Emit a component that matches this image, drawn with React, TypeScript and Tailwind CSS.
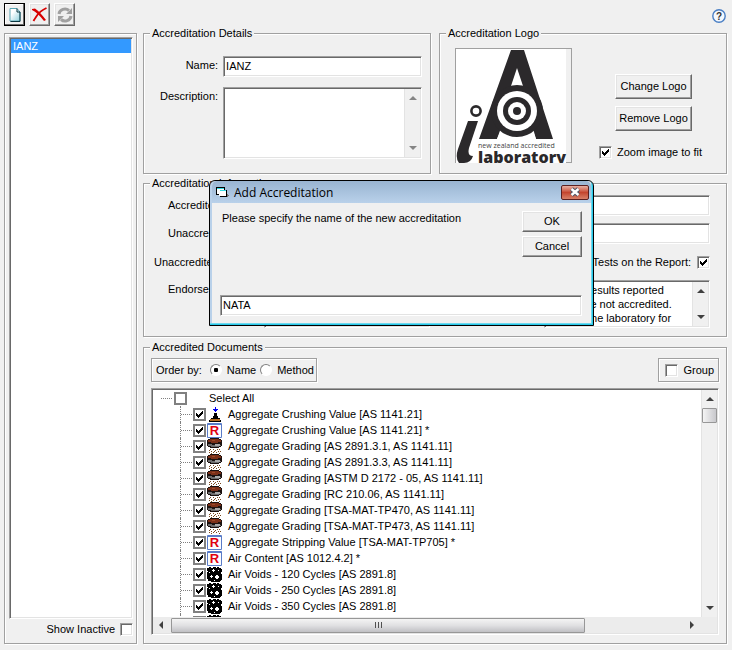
import { useId, type ReactNode } from "react";

const SUNKEN =
  "border border-t-[#a0a0a0] border-l-[#a0a0a0] border-r-white border-b-white bg-white shadow-[inset_1px_1px_0_#696969,inset_-1px_-1px_0_#e3e3e3]";
const ETCHED = "border border-[#a0a0a0] shadow-[1px_1px_0_#fff,inset_1px_1px_0_#fff]";
const RAISED =
  "border border-t-white border-l-white border-r-[#696969] border-b-[#696969] bg-[#f0f0f0] shadow-[inset_-1px_-1px_0_#a0a0a0,inset_1px_1px_0_#e3e3e3]";

function Group({ title, className = "", children }: { title: string; className?: string; children: ReactNode }) {
  return (
    <fieldset className={`${ETCHED} min-w-0 px-[7px] ${className}`}>
      <legend className="-ml-px bg-[#f0f0f0] px-[2px]">{title}</legend>
      {children}
    </fieldset>
  );
}

function Tick({ id, checked, flat, label }: { id?: string; checked?: boolean; flat?: boolean; label?: string }) {
  return (
    <span className="relative block size-[13px] shrink-0">
      <input
        id={id}
        type="checkbox"
        defaultChecked={checked}
        aria-label={label}
        className={`peer block size-[13px] appearance-none ${flat ? "border-2 border-[#808080] bg-white" : SUNKEN}`}
      />
      <svg
        viewBox="0 0 7 7"
        shapeRendering="crispEdges"
        className="pointer-events-none absolute top-[3px] left-[3px] hidden size-[7px] peer-checked:block"
      >
        <path d="M0 2h1v1h1v1h1v-1h1v-1h1v-1h1v-1h1v3h-1v1h-1v1h-1v1h-1v1h-1v-1h-1v-1h-1z" fill="#000" />
      </svg>
    </span>
  );
}

function Radio({ id, checked }: { id: string; checked?: boolean }) {
  return (
    <span className="relative block size-3 shrink-0">
      <input
        id={id}
        type="radio"
        name="order"
        defaultChecked={checked}
        className="peer block size-3 appearance-none rounded-full border border-t-[#808080] border-l-[#808080] border-r-white border-b-white bg-white"
      />
      <span className="pointer-events-none absolute top-1 left-1 hidden size-1 rounded-[1px] bg-black peer-checked:block" />
    </span>
  );
}

function Arrow({ dir, dim }: { dir: "up" | "down" | "left" | "right"; dim?: boolean }) {
  const d = {
    up: "M4 2L8 6H0Z",
    down: "M0 2H8L4 6Z",
    left: "M6 0V8L2 4Z",
    right: "M2 0V8L6 4Z",
  }[dir];
  return (
    <svg viewBox="0 0 8 8" className="size-2">
      <path d={d} fill={dim ? "#858585" : "#404040"} />
    </svg>
  );
}

function TextArea({ id, value, dim, className }: { id: string; value?: string; dim?: boolean; className: string }) {
  return (
    <div className={`${SUNKEN} flex min-w-0 p-px ${className}`}>
      <textarea
        id={id}
        defaultValue={value}
        className="min-w-0 flex-1 resize-none overflow-hidden bg-transparent px-px pt-px leading-[14px] whitespace-pre outline-none"
      />
      <div className="flex w-4 shrink-0 flex-col items-center justify-between border-l border-[#e3e3e3] bg-[#f0f0f0] py-[5px]">
        <Arrow dir="up" dim={dim} />
        <Arrow dir="down" dim={dim} />
      </div>
    </div>
  );
}

function TextBox({ id, value, label, className = "" }: { id?: string; value?: string; label?: string; className?: string }) {
  return (
    <input
      id={id}
      type="text"
      aria-label={label}
      defaultValue={value}
      className={`${SUNKEN} block h-[21px] min-w-0 px-[2px] pb-[2px] outline-none ${className}`}
    />
  );
}

function PushButton({ children, className }: { children: ReactNode; className: string }) {
  return (
    <button type="button" className={`${RAISED} ${className}`}>
      {children}
    </button>
  );
}

function ToolButton({ label, active, children }: { label: string; active?: boolean; children: ReactNode }) {
  return (
    <button
      type="button"
      aria-label={label}
      className={`flex h-[23px] w-[21px] items-center justify-center ${
        active ? "border border-black bg-[#f0f0f0] shadow-[inset_-1px_-1px_0_#696969,inset_1px_1px_0_#fff]" : RAISED
      }`}
    >
      {children}
    </button>
  );
}

function LogoPicture() {
  return (
    <svg viewBox="0 0 115 114" className="absolute top-0 left-0 h-[114px] w-[115px]">
      <rect x="0" y="0" width="110" height="114" fill="#fff" />
      <rect x="110" y="0" width="5" height="113" fill="#f0f0f0" />
      <path d="M55 1H68L97 90H80L76 79H46L41 90H23Z" fill="#2b292b" />
      <path d="M61 19L67 37H55Z" fill="#fff" />
      <path d="M41 90L46 76H76L80 90Z" fill="#fff" />
      <circle cx="61" cy="62" r="26" fill="#2b292b" />
      <circle cx="61" cy="62" r="20" fill="#fff" />
      <circle cx="61" cy="62" r="14" fill="#2b292b" />
      <circle cx="61" cy="62" r="9" fill="#fff" />
      <circle cx="61" cy="62" r="4" fill="#2b292b" />
      <circle cx="20" cy="62" r="4.600" fill="#fff" stroke="#2b292b" strokeWidth="2.600" />
      <path d="M12 72H22L13 99Q11 107 17 107Q15 114 8 114H3Q-1 109 2 100Z" fill="#2b292b" />
      <text x="22" y="99" fontSize="7" fill="#444" fontFamily="'Open Sans', sans-serif">
        new zealand accredited
      </text>
      <text x="22" y="114" fontSize="16" fontWeight="800" fill="#2b292b" fontFamily="'Open Sans', sans-serif">
        laboratory
      </text>
    </svg>
  );
}

type Kind = "crush" | "report" | "sieve" | "voids";

function DocIcon({ kind }: { kind: Kind }) {
  if (kind === "report")
    return (
      <span className="flex size-[15px] items-center justify-center rounded-[1px] border border-t-2 border-[#5a7cc8] bg-[#fafcff] text-[13px] leading-none font-bold text-[#e00010]">
        R
      </span>
    );
  if (kind === "crush")
    return (
      <svg viewBox="0 0 15 15" shapeRendering="crispEdges" className="size-[15px]">
        <path d="M8 0h1v2h2v1h-1v1h-1v1h-1v-1h-1v-1h-1v-1h2z" fill="#0000f0" />
        <path d="M7 6h3v5h3v1h-9v-1h3zM2 13h1v1h-1zM13 13h1v1h-1zM2 14h12v1h-12z" fill="#000" />
        <path d="M6 9h5v2h-5z" fill="#000" />
        <path d="M3 12h10v2h-10z" fill="#b06a20" />
      </svg>
    );
  if (kind === "sieve")
    return (
      <svg viewBox="0 0 15 16" shapeRendering="crispEdges" className="h-4 w-[15px]">
        <path d="M3 0h9v1h2v1h1v6h-1v1h-2v1h-9v-1h-2v-1h-1v-6h1v-1h2z" fill="#1c1210" />
        <path d="M3 1h9v1h2v2h-3v1h-7v-1h-3v-2h2z" fill="#7c3018" />
        <path d="M5 2h3v1h-3z" fill="#a04a28" />
        <path d="M1 6h4v1h9v1h-2v1h-8v-1h-3z" fill="#6c6c6c" />
        <path d="M8 6h5v2h-5z" fill="#a8a8a8" />
        <path
          d="M3 11h1v1h-1zM6 11h1v1h-1zM10 11h1v1h-1zM12 11h1v1h-1zM2 12h1v1h-1zM8 12h1v1h-1zM4 13h1v1h-1zM7 13h1v1h-1zM11 13h1v1h-1zM13 13h1v1h-1zM2 14h1v1h-1zM6 14h1v1h-1zM9 14h1v1h-1zM12 15h1v1h-1zM4 15h1v1h-1z"
          fill="#7a4a20"
        />
      </svg>
    );
  return (
    <svg viewBox="0 0 15 15" shapeRendering="crispEdges" className="size-[15px]">
      <path d="M0 0H15V15H0Z" fill="#000" />
      <path
        d="M0 0h2v1h-2zM4 0h2v1h-2zM9 0h1v1h-1zM12 0h3v2h-1v-1h-2zM6 2h1v1h1v1h-1v1h-1v-1h-1v-1h1zM11 3h1v1h-1zM0 4h1v1h-1zM2 5h1v1h-1zM4 8h1v1h1v1h-1v1h-1v-1h-1v-1h1zM9 8h2v1h1v2h-1v1h-2v-1h-1v-2h1zM14 5h1v2h-1zM0 12h1v3h-1zM1 14h3v1h-3zM7 13h1v1h-1zM14 13h1v2h-2v-1h1z"
        fill="#fff"
      />
    </svg>
  );
}

const DOCS: { kind: Kind; name: string }[] = [
  { kind: "crush", name: "Aggregate Crushing Value [AS 1141.21]" },
  { kind: "report", name: "Aggregate Crushing Value [AS 1141.21] *" },
  { kind: "sieve", name: "Aggregate Grading [AS 2891.3.1, AS 1141.11]" },
  { kind: "sieve", name: "Aggregate Grading [AS 2891.3.3, AS 1141.11]" },
  { kind: "sieve", name: "Aggregate Grading [ASTM D 2172 - 05, AS 1141.11]" },
  { kind: "sieve", name: "Aggregate Grading [RC 210.06, AS 1141.11]" },
  { kind: "sieve", name: "Aggregate Grading [TSA-MAT-TP470, AS 1141.11]" },
  { kind: "sieve", name: "Aggregate Grading [TSA-MAT-TP473, AS 1141.11]" },
  { kind: "report", name: "Aggregate Stripping Value [TSA-MAT-TP705] *" },
  { kind: "report", name: "Air Content [AS 1012.4.2] *" },
  { kind: "voids", name: "Air Voids - 120 Cycles [AS 2891.8]" },
  { kind: "voids", name: "Air Voids - 250 Cycles [AS 2891.8]" },
  { kind: "voids", name: "Air Voids - 350 Cycles [AS 2891.8]" },
  { kind: "voids", name: "Air Voids - 500 Cycles [AS 2891.8]" },
];

function DocRow({ kind, name }: { kind: Kind; name: string }) {
  const id = useId();
  return (
    <li className="flex h-4 items-center border-l border-dotted border-[#808080]">
      <span className="mr-px w-[11px] border-t border-dotted border-[#808080]" />
      <Tick id={id} checked flat />
      <label htmlFor={id} className="ml-px flex items-center gap-[6px] whitespace-nowrap">
        <DocIcon kind={kind} />
        {name}
      </label>
    </li>
  );
}

function Toolbar() {
  return (
    <header className="flex items-start justify-between pt-[3px] pr-[6px] pl-1">
      <div className="flex gap-1">
        <ToolButton label="New" active>
          <svg viewBox="0 0 12 14" className="h-[14px] w-3">
            <defs>
              <linearGradient id="page" x1="0" y1="0" x2="1" y2="1">
                <stop offset="0.300" stopColor="#fff" />
                <stop offset="1" stopColor="#8fd0dc" />
              </linearGradient>
            </defs>
            <path d="M1 .5H8L11 4V13H1Z" fill="url(#page)" stroke="#5aa6b4" />
            <path d="M8 .5V4H11V13.500H1.500" fill="none" stroke="#0b3640" />
          </svg>
        </ToolButton>
        <ToolButton label="Delete">
          <svg viewBox="0 0 16 16" className="size-4 shrink-0">
            <path d="M0 2L3 1.500Q8 5 14 13L12 14Q6 6 0 3Z" fill="#d80000" />
            <path d="M14.500 1Q8 4 5 8.500T1.500 14" fill="none" stroke="#d80000" strokeWidth="1.800" />
          </svg>
        </ToolButton>
        <ToolButton label="Refresh">
          <svg viewBox="0 0 16 16" className="size-4 shrink-0">
            <path d="M2 7A6 5.500 0 0 1 12 3.500M14 9A6 5.500 0 0 1 4 12.500" fill="none" stroke="#a0a0a0" strokeWidth="3" />
            <path d="M15 1V7H9ZM1 15V9H7Z" fill="#a0a0a0" />
          </svg>
        </ToolButton>
      </div>
      <button type="button" aria-label="Help" className="mt-[6px]">
        <svg viewBox="0 0 14 14" className="size-[14px]">
          <circle cx="7" cy="7" r="6.200" fill="#f4f8fd" stroke="#4a7fc4" strokeWidth="1.400" />
          <text x="7" y="10.800" textAnchor="middle" fontSize="10" fontWeight="bold" fill="#333">
            ?
          </text>
        </svg>
      </button>
    </header>
  );
}

function Dialog() {
  return (
    <div
      role="dialog"
      aria-labelledby="dialog-title"
      className="absolute top-[180px] left-[209px] w-[385px] rounded-t-[6px] border border-black bg-[#f0f0f0] shadow-[inset_-1px_-1px_0_#28c8e8,inset_-2px_-2px_0_#6fd8ee,inset_2px_0_0_#b9d1ea]"
    >
      <div className="mx-[2px] flex h-[22px] items-center rounded-t-[5px] bg-linear-to-b from-[#99b4d1] to-[#b9d1ea] pr-[2px] pl-1">
        <svg viewBox="0 0 13 12" shapeRendering="crispEdges" className="h-3 w-[13px]">
          <path d="M0 1h9v8h-9z" fill="#000" />
          <path d="M1 3h7v5h-7z" fill="#fff" />
          <path d="M1 2h7v1h-7z" fill="#30d8e0" />
          <path d="M4 4h7v7h-7z" fill="#000" />
          <path d="M3 5h7v5h-7z" fill="#fff" />
          <path d="M4 4h6v1h-6z" fill="#30d8e0" />
          <path d="M11 8h1v1h1v1h-1v1h-1z" fill="#777" />
        </svg>
        <h2 id="dialog-title" className="ml-[5px] flex-1 pt-px font-['Open_Sans',sans-serif] text-[12px] leading-4">
          Add Accreditation
        </h2>
        <button
          type="button"
          aria-label="Close"
          className="flex h-[15px] w-7 items-center justify-center rounded-[2px] border border-[#5b2020] bg-linear-to-b from-[#e8b0a4] via-[#c4452e] to-[#d88068]"
        >
          <svg viewBox="0 0 12 10" className="h-[10px] w-3">
            <path d="M2.500 2L9.500 8M9.500 2L2.500 8" stroke="#4c5566" strokeWidth="4.400" />
            <path d="M2.500 2L9.500 8M9.500 2L2.500 8" stroke="#fff" strokeWidth="2.400" />
          </svg>
        </button>
      </div>
      <div className="flex justify-between pt-2 pr-[11px] pl-3">
        <label htmlFor="new-name" className="pt-px">
          Please specify the name of the new accreditation
        </label>
        <div className="flex flex-col gap-1">
          <PushButton className="h-[21px] w-[60px]">OK</PushButton>
          <PushButton className="h-[21px] w-[60px]">Cancel</PushButton>
        </div>
      </div>
      <div className="flex pt-[38px] pr-[11px] pb-[9px] pl-[10px]">
        <TextBox id="new-name" value="NATA" className="flex-1" />
      </div>
    </div>
  );
}

export default function App() {
  return (
    <div className="relative flex h-screen flex-col bg-[#f0f0f0] font-['Liberation_Sans',Arial,sans-serif] text-[11px] leading-[13px] text-black">
      <Toolbar />
      <main className="flex min-h-0 flex-1 gap-[6px] pt-px pr-[5px] pb-[6px] pl-1">
        <aside className={`${ETCHED} mt-[6px] flex w-[133px] shrink-0 flex-col pt-[3px] pr-[3px] pb-[7px] pl-1`}>
          <ul role="listbox" aria-label="Accreditations" className={`${SUNKEN} flex-1 p-px`}>
            <li role="option" aria-selected="true" className="h-[14px] bg-[#3399ff] pl-[2px] leading-[14px] text-white">
              IANZ
            </li>
          </ul>
          <div className="mt-1 flex items-center justify-end gap-[5px]">
            <label htmlFor="inactive">Show Inactive</label>
            <Tick id="inactive" />
          </div>
        </aside>

        <div className="flex min-w-0 flex-1 flex-col">
          <div className="grid grid-cols-2 gap-2">
            <Group title="Accreditation Details">
              <div className="grid grid-cols-[auto_1fr] gap-x-[5px] gap-y-[10px] pt-4 pr-px pb-[14px] pl-[9px]">
                <label htmlFor="name" className="pt-[3px] text-right">
                  Name:
                </label>
                <TextBox id="name" value="IANZ" />
                <label htmlFor="description" className="pt-[3px] text-right">
                  Description:
                </label>
                <TextArea id="description" dim className="h-[72px]" />
              </div>
            </Group>
            <Group title="Accreditation Logo">
              <div className="flex justify-between pt-2 pr-[17px] pb-[10px] pl-2">
                <div
                  role="img"
                  aria-label="New Zealand accredited laboratory"
                  className="relative h-[115px] w-[117px] border border-[#a0a0a0]"
                >
                  <LogoPicture />
                </div>
                <div className="flex flex-col gap-[7px] pt-[26px]">
                  <PushButton className="ml-4 h-[25px] w-[77px]">Change Logo</PushButton>
                  <PushButton className="ml-4 h-[25px] w-[77px]">Remove Logo</PushButton>
                  <div className="flex items-center gap-[5px] pt-2">
                    <Tick id="zoom" checked />
                    <label htmlFor="zoom">Zoom image to fit</label>
                  </div>
                </div>
              </div>
            </Group>
          </div>

          <Group title="Accreditation Information" className="mt-[3px]">
            <div className="flex flex-col gap-[7px] pt-[5px] pr-[9px] pb-2 pl-[3px]">
              <div className="flex items-center pl-[14px]">
                <label htmlFor="acc-text" className="w-24">
                  Accredited Text:
                </label>
                <TextBox id="acc-text" className="flex-1" />
              </div>
              <div className="flex items-center pl-[14px]">
                <label htmlFor="unacc-text" className="w-24">
                  Unaccredited Text:
                </label>
                <TextBox id="unacc-text" className="flex-1" />
              </div>
              <div className="flex h-[22px] items-center">
                <label htmlFor="unacc-symbol" className="w-[110px]">
                  Unaccredited Mark:
                </label>
                <TextBox id="unacc-symbol" className="w-20" />
                <label htmlFor="show-tests" className="ml-auto">
                  Show Unaccredited Tests on the Report:
                </label>
                <span className="ml-[6px]">
                  <Tick id="show-tests" checked />
                </span>
              </div>
              <div className="flex pl-[14px]">
                <label htmlFor="endorsement" className="w-24 pt-[3px]">
                  Endorsement:
                </label>
                <TextArea id="endorsement" className="h-12 flex-1" />
                <label htmlFor="comment" className="w-[114px] pt-[3px] pl-2">
                  Report Comment:
                </label>
                <TextArea
                  id="comment"
                  value={"Sample results reported\nherein are not accredited.\nContact the laboratory for"}
                  className="h-12 flex-1"
                />
              </div>
            </div>
          </Group>

          <Group title="Accredited Documents" className="mt-1 flex min-h-0 flex-1 flex-col pb-2">
            <div className="flex justify-between pt-1">
              <div className={`${ETCHED} flex h-6 items-center pr-[2px] pl-1`}>
                <span>Order by:</span>
                <span className="ml-2">
                  <Radio id="by-name" checked />
                </span>
                <label htmlFor="by-name" className="ml-[5px]">
                  Name
                </label>
                <span className="ml-1">
                  <Radio id="by-method" />
                </span>
                <label htmlFor="by-method" className="ml-[5px]">
                  Method
                </label>
              </div>
              <div className={`${ETCHED} flex h-6 items-center gap-[5px] pr-1 pl-[6px]`}>
                <Tick id="group" />
                <label htmlFor="group">Group</label>
              </div>
            </div>
            <div className={`${SUNKEN} mt-[6px] flex min-h-0 flex-1 flex-col p-px`}>
              <div className="flex min-h-0 flex-1">
                <div className="min-w-0 flex-1 overflow-hidden pl-2">
                  <div className="flex h-4 items-center">
                    <span className="mr-[2px] w-[11px] border-t border-dotted border-[#808080]" />
                    <Tick id="select-all" flat />
                    <label htmlFor="select-all" className="ml-[22px]">
                      Select All
                    </label>
                  </div>
                  <ul className="ml-[19px]">
                    {DOCS.map((doc) => (
                      <DocRow key={doc.name} {...doc} />
                    ))}
                  </ul>
                </div>
                <div className="flex w-4 shrink-0 flex-col items-center border-l border-[#e3e3e3] bg-[#f0f0f0] py-[5px]">
                  <Arrow dir="up" />
                  <div className="mt-[5px] h-[15px] w-[15px] rounded-[1px] border border-[#979797] bg-linear-to-r from-[#f4f4f4] to-[#c8c8cc]" />
                  <div className="flex-1" />
                  <Arrow dir="down" />
                </div>
              </div>
              <div className="flex h-4 shrink-0 items-center bg-[#ececec] pr-[21px] pl-1">
                <Arrow dir="left" />
                <div className="min-w-0 flex-1 pl-[6px]">
                  <div className="flex h-[15px] w-4/5 items-center justify-center gap-px rounded-[1px] border border-[#979797] bg-linear-to-b from-[#f4f4f4] via-[#e0e0e2] to-[#c0c0c4]">
                    <span className="h-[6px] w-[2px] border-r border-[#505050]" />
                    <span className="h-[6px] w-[2px] border-r border-[#505050]" />
                    <span className="h-[6px] w-[2px] border-r border-[#505050]" />
                  </div>
                </div>
                <Arrow dir="right" />
              </div>
            </div>
          </Group>
        </div>
      </main>
      <Dialog />
    </div>
  );
}
